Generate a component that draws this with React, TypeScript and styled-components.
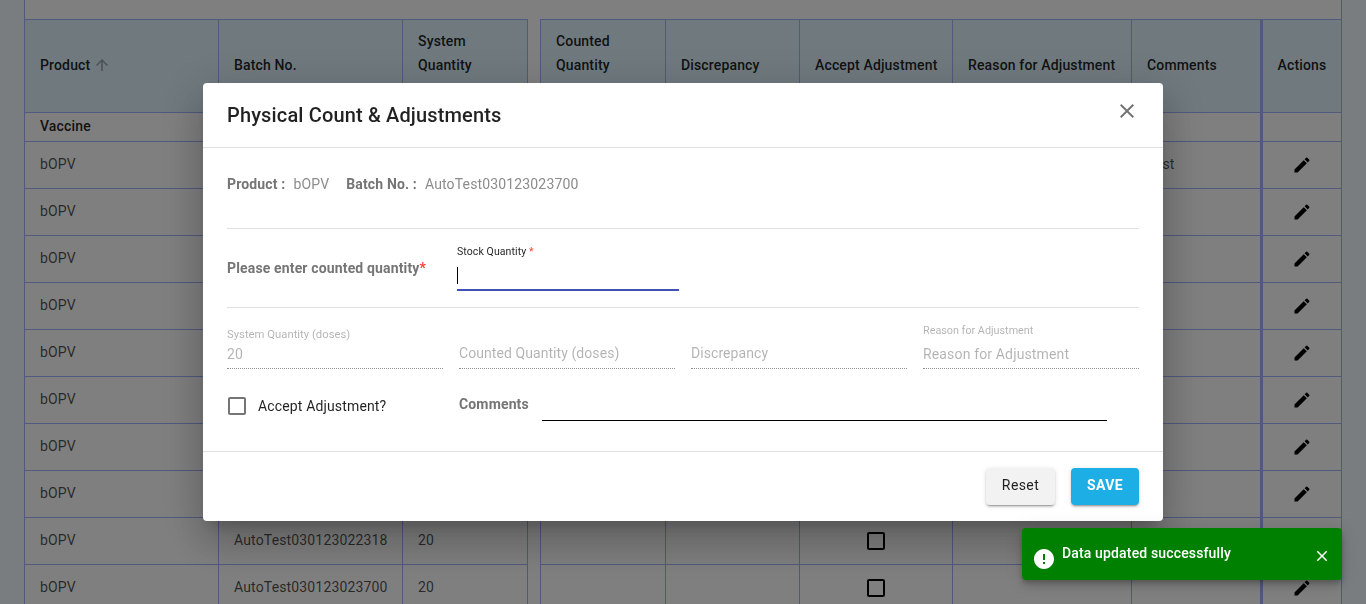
import { FC } from "react";
import styled, { createGlobalStyle } from "styled-components";

const GlobalStyle = createGlobalStyle`
  html, body {
    margin: 0;
    padding: 0;
    height: 100%;
    overflow: hidden;
    background: #f2fbff;
    font-family: Roboto, "Liberation Sans", sans-serif;
  }
`;

const EDIT_PATH =
  "M3 17.25V21h3.75L17.81 9.94l-3.75-3.75L3 17.25zM20.71 7.04c.39-.39.39-1.02 0-1.41l-2.34-2.34a.9959.9959 0 0 0-1.41 0l-1.83 1.83 3.75 3.75 1.83-1.83z";
const BOX_PATH =
  "M19 5v14H5V5h14m0-2H5c-1.1 0-2 .9-2 2v14c0 1.1.9 2 2 2h14c1.1 0 2-.9 2-2V5c0-1.1-.9-2-2-2z";
const CLOSE_PATH =
  "M19 6.41L17.59 5 12 10.59 6.41 5 5 6.41 10.59 12 5 17.59 6.41 19 12 13.41 17.59 19 19 17.59 13.41 12z";
const ARROW_PATH =
  "M4 12l1.41 1.41L11 7.83V20h2V7.83l5.58 5.59L20 12l-8-8-8 8z";
const ERROR_PATH =
  "M12 2C6.48 2 2 6.48 2 12s4.48 10 10 10 10-4.48 10-10S17.52 2 12 2zm1 15h-2v-2h2v2zm0-4h-2V7h2v6z";

interface IIcon {
  d: string;
  size: number;
  color: string;
}

interface IStockRow {
  id: number;
  batch: string;
  quantity: string;
}

const Icon: FC<IIcon> = ({ d, size, color }): JSX.Element => (
  <svg width={size} height={size} viewBox="0 0 24 24" fill={color} style={{ display: "block", flex: "none" }}>
    <path d={d} />
  </svg>
);

const LEFT_COLUMNS = "194px 184px 125px";
const RIGHT_COLUMNS = "125px 134px 153px 179px 129px 80px";

// the first eight rows sit behind the dialog, so only their product column shows
const stockRows: IStockRow[] = [
  ...Array.from({ length: 8 }, (_, id) => ({ id, batch: "", quantity: "" })),
  { id: 8, batch: "AutoTest030123022318", quantity: "20" },
  { id: 9, batch: "AutoTest030123023700", quantity: "20" },
];

const App: FC = (): JSX.Element => {
  return (
    <>
      <GlobalStyle />
      <Page>
        <TableFrame>
          <LeftTable>
            <HeadRow $columns={LEFT_COLUMNS}>
              <HeadCell>
                <HeadText>
                  Product
                  <SortIcon>
                    <Icon d={ARROW_PATH} size={18} color="#95a1a9" />
                  </SortIcon>
                </HeadText>
              </HeadCell>
              <HeadCell>
                <HeadText>Batch No.</HeadText>
              </HeadCell>
              <HeadCell>
                <HeadText>
                  System
                  <br />
                  Quantity
                </HeadText>
              </HeadCell>
            </HeadRow>
            <GroupRow $columns={LEFT_COLUMNS}>
              <GroupCell>Vaccine</GroupCell>
              <GroupCell />
              <GroupCell />
            </GroupRow>
            {stockRows.map((row) => (
              <BodyRow $columns={LEFT_COLUMNS} key={row.id}>
                <BodyCell>bOPV</BodyCell>
                <BodyCell>{row.batch}</BodyCell>
                <BodyCell>{row.quantity}</BodyCell>
              </BodyRow>
            ))}
          </LeftTable>
          <RightTable>
            <HeadRow $columns={RIGHT_COLUMNS}>
              <HeadCell>
                <HeadText>
                  Counted
                  <br />
                  Quantity
                </HeadText>
              </HeadCell>
              <HeadCell>
                <HeadText>Discrepancy</HeadText>
              </HeadCell>
              <HeadCell>
                <HeadText>Accept Adjustment</HeadText>
              </HeadCell>
              <HeadCell>
                <HeadText>Reason for Adjustment</HeadText>
              </HeadCell>
              <HeadCell>
                <HeadText>Comments</HeadText>
              </HeadCell>
              <ActionHead>
                <HeadText>Actions</HeadText>
              </ActionHead>
            </HeadRow>
            <GroupRow $columns={RIGHT_COLUMNS}>
              <GroupCell />
              <GroupCell />
              <GroupCell />
              <GroupCell />
              <GroupCell />
              <ActionGroup />
            </GroupRow>
            {stockRows.map((row) => (
              <BodyRow $columns={RIGHT_COLUMNS} key={row.id}>
                <BodyCell />
                <BodyCell />
                <CheckCell>
                  <Icon d={BOX_PATH} size={24} color="#000" />
                </CheckCell>
                <BodyCell />
                <BodyCell>{row.id === 0 ? "Test" : ""}</BodyCell>
                <ActionCell>
                  <Icon d={EDIT_PATH} size={20} color="#000" />
                </ActionCell>
              </BodyRow>
            ))}
          </RightTable>
        </TableFrame>
      </Page>

      <Overlay>
        <Dialog>
          <DialogHeader>
            <DialogTitle>Physical Count &amp; Adjustments</DialogTitle>
            <CloseButton>
              <Icon d={CLOSE_PATH} size={24} color="#757575" />
            </CloseButton>
          </DialogHeader>

          <DialogBody>
            <InfoRow>
              <InfoLabel>Product :</InfoLabel>
              <InfoValue>bOPV</InfoValue>
              <InfoLabel>Batch No. :</InfoLabel>
              <InfoValue>AutoTest030123023700</InfoValue>
            </InfoRow>

            <EntryRow>
              <EntryLabel>
                Please enter counted quantity<Required>*</Required>
              </EntryLabel>
              <StockField>
                <StockLabel>
                  Stock Quantity <Required>*</Required>
                </StockLabel>
                <StockInput>
                  <Caret />
                </StockInput>
              </StockField>
            </EntryRow>

            <ReadOnlyRow>
              <ReadOnlyField>
                <ReadOnlyLabel $size={11.3} $gap={5}>System Quantity (doses)</ReadOnlyLabel>
                <ReadOnlyValue $drop>20</ReadOnlyValue>
              </ReadOnlyField>
              <ReadOnlyField>
                <ReadOnlyValue>Counted Quantity (doses)</ReadOnlyValue>
              </ReadOnlyField>
              <ReadOnlyField>
                <ReadOnlyValue>Discrepancy</ReadOnlyValue>
              </ReadOnlyField>
              <ReadOnlyField>
                <ReadOnlyLabel $size={10.8} $gap={9}>Reason for Adjustment</ReadOnlyLabel>
                <ReadOnlyValue $drop>Reason for Adjustment</ReadOnlyValue>
              </ReadOnlyField>
            </ReadOnlyRow>

            <CommentRow>
              <AcceptGroup>
                <Icon d={BOX_PATH} size={24} color="#757575" />
                <AcceptText>Accept Adjustment?</AcceptText>
              </AcceptGroup>
              <CommentGroup>
                <CommentLabel>Comments</CommentLabel>
                <CommentInput />
              </CommentGroup>
            </CommentRow>
          </DialogBody>

          <DialogFooter>
            <ResetButton>Reset</ResetButton>
            <SaveButton>SAVE</SaveButton>
          </DialogFooter>
        </Dialog>

        <Snackbar>
          <SnackIcon>
            <Icon d={ERROR_PATH} size={24} color="#fff" />
          </SnackIcon>
          <SnackText>Data updated successfully</SnackText>
          <SnackClose>
            <Icon d={CLOSE_PATH} size={18} color="#fff" />
          </SnackClose>
        </Snackbar>
      </Overlay>
    </>
  );
};

export default App;

const LINE = "#a3b2ff";

const Page = styled.div`
  height: 604px;
  overflow: hidden;
  padding: 0 24px;
`;

const TableFrame = styled.div`
  display: flex;
  gap: 12px;
  width: 1318px;
  box-sizing: border-box;
  padding-top: 19px;
  background: #fff;
  border-left: 1px solid ${LINE};
  border-right: 1px solid ${LINE};
`;

const LeftTable = styled.div`
  width: 503px;
  flex: none;
`;

const RightTable = styled.div`
  flex: 1;
  min-width: 0;
  border-left: 1px solid ${LINE};
`;

const Row = styled.div<{ $columns: string }>`
  display: grid;
  grid-template-columns: ${(p) => p.$columns};
  border-bottom: 1px solid ${LINE};
  box-sizing: content-box;
`;

const HeadRow = styled(Row)`
  height: 92px;
  background: #dff3fd;
  border-top: 1px solid ${LINE};
`;

const GroupRow = styled(Row)`
  height: 28px;
`;

const BodyRow = styled(Row)`
  height: 46px;
`;

const Cell = styled.div`
  display: flex;
  align-items: center;
  padding: 0 0 2px 15px;
  box-sizing: border-box;
  border-right: 1px solid ${LINE};
  font-size: 14px;
  letter-spacing: 0.01071em;
  min-width: 0;
  white-space: nowrap;
`;

const HeadCell = styled(Cell)`
  align-items: flex-end;
  padding-bottom: 35px;
`;

const HeadText = styled.div`
  font-weight: 500;
  line-height: 24px;
  color: rgba(0, 0, 0, 0.87);
`;

const SortIcon = styled.span`
  display: inline-block;
  vertical-align: -4px;
  margin-left: 3px;
`;

const ActionHead = styled(HeadCell)`
  justify-content: center;
  padding-left: 0;
  border-right: none;
  border-left: 2px solid ${LINE};
`;

const GroupCell = styled(Cell)`
  font-weight: 500;
  color: rgba(0, 0, 0, 0.87);
`;

const ActionGroup = styled(GroupCell)`
  border-right: none;
  border-left: 2px solid ${LINE};
`;

const BodyCell = styled(Cell)`
  color: rgba(0, 0, 0, 0.7);
`;

const CheckCell = styled(BodyCell)`
  justify-content: center;
  padding: 0;
`;

const ActionCell = styled(BodyCell)`
  justify-content: center;
  padding: 0;
  border-right: none;
  border-left: 2px solid ${LINE};
`;

const Overlay = styled.div`
  position: fixed;
  inset: 0;
  display: flex;
  align-items: center;
  justify-content: center;
  background: rgba(0, 0, 0, 0.5);
`;

const Dialog = styled.div`
  width: 960px;
  height: 438px;
  display: flex;
  flex-direction: column;
  background: #fff;
  border-radius: 4px;
  box-shadow: 0 11px 15px -7px rgba(0, 0, 0, 0.2), 0 24px 38px 3px rgba(0, 0, 0, 0.14),
    0 9px 46px 8px rgba(0, 0, 0, 0.12);
`;

const DialogHeader = styled.div`
  height: 65px;
  flex: none;
  box-sizing: border-box;
  display: flex;
  align-items: center;
  justify-content: space-between;
  padding: 0 24px;
  border-bottom: 1px solid #e0e0e0;
`;

const DialogTitle = styled.h2`
  margin: 0;
  font-size: 20px;
  font-weight: 500;
  line-height: 64px;
  letter-spacing: 0.0075em;
  color: rgba(0, 0, 0, 0.87);
`;

const CloseButton = styled.div`
  margin-top: -8px;
`;

const DialogBody = styled.div`
  flex: 1;
  padding: 0 24px;
`;

const InfoRow = styled.div`
  height: 81px;
  display: flex;
  align-items: flex-start;
  padding-top: 28px;
  box-sizing: border-box;
  border-bottom: 1px solid #e0e0e0;
  font-size: 14px;
  line-height: 16px;
  letter-spacing: 0.01071em;
`;

const InfoLabel = styled.span`
  font-weight: 700;
  color: #757575;
  margin-right: 8px;
`;

const InfoValue = styled.span`
  color: #8c8c8c;
  margin-right: 17px;
`;

const EntryRow = styled.div`
  height: 79px;
  display: grid;
  grid-template-columns: 230px 222px;
  align-items: start;
  box-sizing: border-box;
  border-bottom: 1px solid #e0e0e0;
`;

const EntryLabel = styled.div`
  margin-top: 31px;
  font-size: 14px;
  line-height: 16px;
  font-weight: 700;
  color: #757575;
  letter-spacing: 0.01071em;
  white-space: nowrap;
`;

const Required = styled.span`
  color: #f44336;
`;

const StockField = styled.div`
  padding-top: 17px;
`;

const StockLabel = styled.div`
  font-size: 10.5px;
  line-height: 12px;
  letter-spacing: 0.1px;
  color: rgba(0, 0, 0, 0.87);
  white-space: nowrap;
`;

const StockInput = styled.div`
  margin-top: 4px;
  height: 29px;
  box-sizing: border-box;
  border-bottom: 2px solid #3f51b5;
  padding-top: 5px;
`;

const Caret = styled.span`
  display: block;
  width: 1px;
  height: 17px;
  background: #000;
`;

const ReadOnlyRow = styled.div`
  display: grid;
  grid-template-columns: repeat(4, 216px);
  gap: 16px;
  height: 61px;
  align-items: end;
`;

const ReadOnlyField = styled.div`
  border-bottom: 1px dotted rgba(0, 0, 0, 0.42);
  padding-bottom: 6px;
`;

const ReadOnlyLabel = styled.div<{ $size: number; $gap: number }>`
  font-size: ${(p) => p.$size}px;
  line-height: 12px;
  margin-bottom: ${(p) => p.$gap}px;
  color: rgba(0, 0, 0, 0.3);
  white-space: nowrap;
`;

const ReadOnlyValue = styled.div<{ $drop?: boolean }>`
  font-size: 14px;
  line-height: 17px;
  color: rgba(0, 0, 0, 0.3);
  letter-spacing: ${(p) => (p.$drop ? "0.01071em" : "0.005em")};
  white-space: nowrap;
  margin-bottom: ${(p) => (p.$drop ? "-1px" : "0")};
`;

const CommentRow = styled.div`
  display: grid;
  grid-template-columns: 232px 648px;
  height: 82px;
  align-items: start;
`;

const AcceptGroup = styled.div`
  display: flex;
  align-items: center;
  margin-top: 25px;
  margin-left: -2px;
  gap: 9px;
`;

const AcceptText = styled.span`
  font-size: 14px;
  color: rgba(0, 0, 0, 0.87);
  letter-spacing: 0.01071em;
`;

const CommentGroup = styled.div`
  display: flex;
  align-items: flex-start;
  margin-top: 27px;
`;

const CommentLabel = styled.span`
  width: 83px;
  flex: none;
  font-size: 14px;
  line-height: 16px;
  font-weight: 700;
  color: #757575;
  letter-spacing: 0.01071em;
`;

const CommentInput = styled.div`
  width: 565px;
  height: 24px;
  border-bottom: 1px solid #000;
`;

const DialogFooter = styled.div`
  height: 70px;
  flex: none;
  display: flex;
  justify-content: flex-end;
  gap: 16px;
  padding: 16px 24px 0;
  box-sizing: border-box;
  border-top: 1px solid #e0e0e0;
`;

const BaseButton = styled.button`
  height: 37px;
  border: none;
  border-radius: 4px;
  font-family: inherit;
  font-size: 14px;
  padding: 0 0 4px;
  letter-spacing: 0.02857em;
  box-shadow: 0 3px 1px -2px rgba(0, 0, 0, 0.2), 0 2px 2px 0 rgba(0, 0, 0, 0.14),
    0 1px 5px 0 rgba(0, 0, 0, 0.12);
`;

const ResetButton = styled(BaseButton)`
  width: 69px;
  background: #f2f2f2;
  font-weight: 400;
  color: rgba(0, 0, 0, 0.87);
`;

const SaveButton = styled(BaseButton)`
  width: 68px;
  background: #1eaee6;
  font-weight: 700;
  color: #fff;
`;

const Snackbar = styled.div`
  position: fixed;
  right: 24px;
  bottom: 24px;
  width: 320px;
  height: 52px;
  box-sizing: border-box;
  display: flex;
  align-items: flex-start;
  padding-left: 10px;
  background: #008000;
  border-radius: 4px;
  color: #fff;
  box-shadow: 0 3px 5px -1px rgba(0, 0, 0, 0.2), 0 6px 10px 0 rgba(0, 0, 0, 0.14),
    0 1px 18px 0 rgba(0, 0, 0, 0.12);
`;

const SnackIcon = styled.div`
  margin-top: 19px;
`;

const SnackText = styled.span`
  margin-left: 6px;
  margin-top: 16px;
  flex: 1;
  font-size: 14px;
  line-height: 18px;
  font-weight: 500;
  letter-spacing: 0.01071em;
`;

const SnackClose = styled.div`
  margin-top: 19px;
  margin-right: 11px;
`;
